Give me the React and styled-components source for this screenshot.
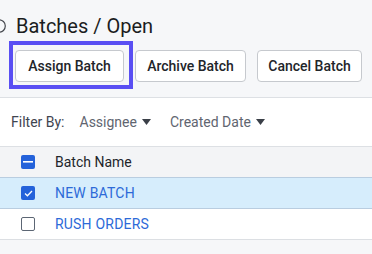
import React from "react";
import styled, { createGlobalStyle } from "styled-components";

const Global = createGlobalStyle`
  html, body { margin: 0; padding: 0; background: #f6f7f9; }
  body { font-family: Roboto, "Liberation Sans", Arial, sans-serif; overflow: hidden; }
  * { box-sizing: border-box; }
`;

const Page = styled.div`
  width: 372px;
  height: 254px;
  background: #f6f7f9;
  overflow: hidden;
`;

const TitleRow = styled.div`
  display: flex;
  align-items: center;
  gap: 10px;
  padding-top: 14px;
  margin-left: -8px;
  height: 38px;
`;

const Title = styled.h1`
  margin: 0;
  font-size: 20px;
  line-height: 24px;
  font-weight: 400;
  color: #1b1d21;
`;

const Toolbar = styled.div`
  display: flex;
  gap: 11px;
  padding: 12px 0 0 15px;
`;

const FocusWrap = styled.div`
  position: relative;
  display: flex;
`;

const FocusRing = styled.span`
  position: absolute;
  left: -6px;
  top: -9px;
  right: -9px;
  bottom: -7px;
  border: 4px solid #5a4ff3;
  pointer-events: none;
`;

const Button = styled.button`
  height: 32px;
  width: ${(p) => p.$w}px;
  padding: 0;
  background: #fff;
  border: 1px solid #c6c9ce;
  border-radius: 4px;
  font-family: inherit;
  font-size: 14px;
  font-weight: 500;
  color: #22252a;
  display: flex;
  align-items: center;
  justify-content: center;
`;

const FilterBar = styled.div`
  margin-top: 15px;
  height: 50px;
  background: #fff;
  border-top: 1px solid #dde0e4;
  border-bottom: 1px solid #dde0e4;
  display: flex;
  align-items: center;
  padding-left: 11px;
  font-size: 14px;
`;

const FilterLabel = styled.span`
  color: #3f4550;
  margin-right: 15px;
`;

const FilterItem = styled.span`
  display: flex;
  align-items: center;
  gap: 5px;
  color: #5f6570;
  margin-right: 19px;
`;

const Caret = () => (
  <svg width="9" height="6" viewBox="0 0 9 6">
    <path d="M0 0 H9 L4.5 6 Z" fill="#3a3f47" />
  </svg>
);

const Row = styled.div`
  height: ${(p) => p.$h}px;
  display: flex;
  align-items: center;
  padding-left: 21px;
  background: ${(p) => p.$bg};
  border-top: ${(p) => (p.$bt ? `1px solid ${p.$bt}` : "none")};
  border-bottom: ${(p) => (p.$bb ? `1px solid ${p.$bb}` : "none")};
  font-size: 14px;
`;

const Box = styled.span`
  width: 14px;
  height: 14px;
  border-radius: 2px;
  flex: none;
  display: flex;
  align-items: center;
  justify-content: center;
  background: ${(p) => (p.$on ? "#2462da" : "#fff")};
  border: ${(p) => (p.$on ? "none" : "1.5px solid #5c6674")};
  margin-right: 20px;
`;

const HeadText = styled.span`
  color: #22252a;
`;

const LinkText = styled.span`
  color: #2d6ad8;
  letter-spacing: 0.2px;
`;

export default function App() {
  return (
    <Page>
      <Global />
      <TitleRow>
        <svg width="14" height="14" viewBox="0 0 14 14">
          <circle cx="7" cy="7" r="6.3" fill="none" stroke="#45484e" strokeWidth="1.2" />
        </svg>
        <Title>Batches / Open</Title>
      </TitleRow>
      <Toolbar>
        <FocusWrap>
          <Button $w={109}>Assign Batch</Button>
          <FocusRing />
        </FocusWrap>
        <Button $w={111}>Archive Batch</Button>
        <Button $w={105}>Cancel Batch</Button>
      </Toolbar>
      <FilterBar>
        <FilterLabel>Filter By:</FilterLabel>
        <FilterItem>
          Assignee <Caret />
        </FilterItem>
        <FilterItem>
          Created Date <Caret />
        </FilterItem>
      </FilterBar>
      <Row $h={30} $bg="#f3f4f6">
        <Box $on>
          <svg width="10" height="2" viewBox="0 0 10 2">
            <rect width="10" height="1.6" fill="#fff" />
          </svg>
        </Box>
        <HeadText>Batch Name</HeadText>
      </Row>
      <Row $h={32} $bg="#d6edfc" $bt="#b9cde0" $bb="#b9cde0">
        <Box $on>
          <svg width="9" height="7" viewBox="0 0 9 7">
            <path d="M1 3.6 L3.4 5.8 L8 1" fill="none" stroke="#fff" strokeWidth="1.3" />
          </svg>
        </Box>
        <LinkText>NEW BATCH</LinkText>
      </Row>
      <Row $h={31} $bg="#fff" $bb="#dcdfe3">
        <Box />
        <LinkText>RUSH ORDERS</LinkText>
      </Row>
    </Page>
  );
}
